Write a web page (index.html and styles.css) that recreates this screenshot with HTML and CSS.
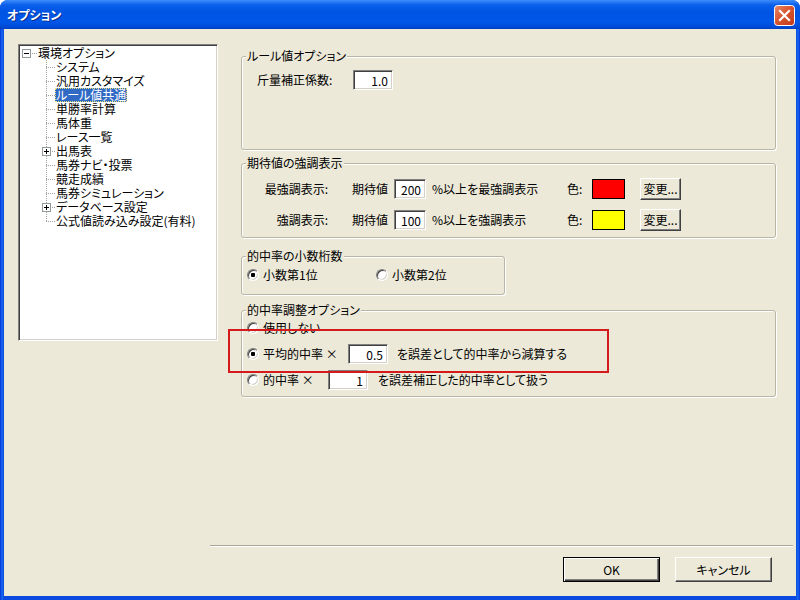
FILE: index.html
```html
<!DOCTYPE html>
<html lang="ja">
<head>
    <meta charset="UTF-8">
    <title>オプション</title>
    <link rel="stylesheet" href="styles.css">
</head>
<body>

    <div class="window">
        <!-- Title bar -->
        <div class="titlebar">
            <span class="title">オプション</span>
            <button class="close-btn" title="閉じる">
                <svg width="21" height="21" viewBox="0 0 21 21">
                    <defs>
                        <linearGradient id="closeGrad" x1="0" y1="0" x2="1" y2="1">
                            <stop offset="0" stop-color="#e98a6c"/>
                            <stop offset="0.45" stop-color="#d9562f"/>
                            <stop offset="1" stop-color="#c0391a"/>
                        </linearGradient>
                    </defs>
                    <rect x="0.5" y="0.5" width="20" height="20" rx="3" fill="url(#closeGrad)" stroke="#fff"/>
                    <path d="M6 6L15 15M15 6L6 15" stroke="#fff" stroke-width="2.2" stroke-linecap="square"/>
                </svg>
            </button>
        </div>

        <div class="client">
            <div class="main">
                <!-- Option tree -->
                <div class="tree">
                    <div class="tree-row tree-root">
                        <span class="twig twig-root">
                            <svg class="expander" width="9" height="9" viewBox="0 0 9 9"><rect x="0.5" y="0.5" width="8" height="8" fill="#fff" stroke="#919b9c"/><path d="M2 4.5h5" stroke="#000"/></svg>
                        </span>
                        <span class="tree-label">環境オプション</span>
                    </div>
                    <div class="tree-row"><span class="twig"></span><span class="tree-label">システム</span></div>
                    <div class="tree-row"><span class="twig"></span><span class="tree-label">汎用カスタマイズ</span></div>
                    <div class="tree-row"><span class="twig"></span><span class="tree-label selected">ルール値共通</span></div>
                    <div class="tree-row"><span class="twig"></span><span class="tree-label">単勝率計算</span></div>
                    <div class="tree-row"><span class="twig"></span><span class="tree-label">馬体重</span></div>
                    <div class="tree-row"><span class="twig"></span><span class="tree-label">レース一覧</span></div>
                    <div class="tree-row">
                        <span class="twig">
                            <svg class="expander" width="9" height="9" viewBox="0 0 9 9"><rect x="0.5" y="0.5" width="8" height="8" fill="#fff" stroke="#919b9c"/><path d="M2 4.5h5M4.5 2v5" stroke="#000"/></svg>
                        </span>
                        <span class="tree-label">出馬表</span>
                    </div>
                    <div class="tree-row"><span class="twig"></span><span class="tree-label">馬券ナビ・投票</span></div>
                    <div class="tree-row"><span class="twig"></span><span class="tree-label">競走成績</span></div>
                    <div class="tree-row"><span class="twig"></span><span class="tree-label">馬券シミュレーション</span></div>
                    <div class="tree-row">
                        <span class="twig">
                            <svg class="expander" width="9" height="9" viewBox="0 0 9 9"><rect x="0.5" y="0.5" width="8" height="8" fill="#fff" stroke="#919b9c"/><path d="M2 4.5h5M4.5 2v5" stroke="#000"/></svg>
                        </span>
                        <span class="tree-label">データベース設定</span>
                    </div>
                    <div class="tree-row"><span class="twig twig-last"></span><span class="tree-label">公式値読み込み設定(有料)</span></div>
                </div>

                <!-- Settings panel -->
                <div class="panel">
                    <div class="group group-rule">
                        <span class="group-title">ルール値オプション</span>
                        <div class="field-row">
                            <span class="field-label">斤量補正係数:</span>
                            <input class="edit" type="text" value="1.0" readonly>
                        </div>
                    </div>

                    <div class="group group-emph">
                        <span class="group-title">期待値の強調表示</span>
                        <div class="emph-row">
                            <span class="emph-label">最強調表示:</span>
                            <span class="emph-kitai">期待値</span>
                            <input class="edit edit-short" type="text" value="200" readonly>
                            <span class="emph-text">%以上を最強調表示</span>
                            <span class="color-label">色:</span>
                            <span class="swatch swatch-red"></span>
                            <button class="btn btn-small">変更...</button>
                        </div>
                        <div class="emph-row">
                            <span class="emph-label">強調表示:</span>
                            <span class="emph-kitai">期待値</span>
                            <input class="edit edit-short" type="text" value="100" readonly>
                            <span class="emph-text">%以上を強調表示</span>
                            <span class="color-label">色:</span>
                            <span class="swatch swatch-yellow"></span>
                            <button class="btn btn-small">変更...</button>
                        </div>
                    </div>

                    <div class="group group-decimal">
                        <span class="group-title">的中率の小数桁数</span>
                        <div class="radio-row">
                            <span class="radio-item decimal-first"><span class="radio checked"></span>小数第1位</span>
                            <span class="radio-item"><span class="radio"></span>小数第2位</span>
                        </div>
                    </div>

                    <div class="group group-adjust">
                        <span class="group-title">的中率調整オプション</span>
                        <div class="adjust-row">
                            <span class="radio"></span>
                            <span class="adjust-text">使用しない</span>
                        </div>
                        <div class="adjust-row row-avg">
                            <span class="radio checked"></span>
                            <span class="adjust-text avg-text">平均的中率 ×</span>
                            <input class="edit" type="text" value="0.5" readonly>
                            <span class="adjust-tail">を誤差として的中率から減算する</span>
                        </div>
                        <div class="adjust-row row-rate">
                            <span class="radio"></span>
                            <span class="adjust-text rate-text">的中率 ×</span>
                            <input class="edit" type="text" value="1" readonly>
                            <span class="adjust-tail tail-rate">を誤差補正した的中率として扱う</span>
                        </div>
                        <!-- red annotation frame -->
                        <div class="highlight-box"></div>
                    </div>
                </div>
            </div>

            <!-- Footer buttons -->
            <div class="footer">
                <div class="separator"></div>
                <div class="button-row">
                    <button class="btn btn-default">OK</button>
                    <button class="btn">キャンセル</button>
                </div>
            </div>
        </div>
    </div>

</body>
</html>
```

FILE: styles.css
```css
* {
    box-sizing: border-box;
}

body {
    margin: 0;
    background: #ffffff;
    font-family: "Noto Sans CJK JP", "Noto Sans", sans-serif;
    font-size: 12px;
    line-height: 14px;
    color: #000;
    font-feature-settings: "palt";
}

/* Window frame */
.window {
    width: 800px;
    height: 600px;
    display: flex;
    flex-direction: column;
    background: linear-gradient(to right, #0831d9 0, #166aee 2px, #0a4ae0 4px, #0a4ae0 796px, #166aee 798px, #0831d9 800px);
    border-radius: 8px 8px 0 0;
    overflow: hidden;
}

.titlebar {
    height: 29px;
    flex: none;
    display: flex;
    align-items: center;
    justify-content: space-between;
    padding: 0 5px 0 7px;
    background: linear-gradient(to bottom, #3c8ef8 0, #2a7af5 2px, #0a5fea 5px, #0054e3 12px, #0056e8 22px, #0049d6 27px, #003fc0 29px);
}

.title {
    color: #fff;
    font-weight: bold;
    font-size: 12px;
    text-shadow: 1px 1px 0 #0b2d8c;
    margin-top: 1px;
}

.close-btn {
    width: 21px;
    height: 21px;
    padding: 0;
    border: none;
    background: none;
    display: block;
    margin-top: 1px;
}

.close-btn svg {
    display: block;
}

.client {
    flex: 1;
    margin: 0 4px 4px;
    background: #ece9d8;
    display: flex;
    flex-direction: column;
}

.main {
    flex: 1;
    display: flex;
    padding: 15px 0 0 14px;
}

/* Tree view */
.tree {
    width: 200px;
    height: 297px;
    flex: none;
    background: #fff;
    border: 1px solid;
    border-color: #808080 #fff #fff #808080;
    box-shadow: inset 1px 1px 0 #404040, inset -1px -1px 0 #d4d0c8;
    padding-top: 1px;
}

.tree-row {
    height: 14px;
    display: flex;
    align-items: flex-start;
    padding-left: 23px;
    white-space: nowrap;
}

.tree-root {
    padding-left: 3px;
}

.twig {
    width: 13px;
    height: 14px;
    flex: none;
    background:
        repeating-linear-gradient(to right, #a0a0a0 0 1px, transparent 1px 2px) 4px 7px / 9px 1px no-repeat,
        repeating-linear-gradient(to bottom, #a0a0a0 0 1px, transparent 1px 2px) 4px 0 / 1px 14px no-repeat;
}

.twig-last {
    background:
        repeating-linear-gradient(to right, #a0a0a0 0 1px, transparent 1px 2px) 4px 7px / 9px 1px no-repeat,
        repeating-linear-gradient(to bottom, #a0a0a0 0 1px, transparent 1px 2px) 4px 0 / 1px 8px no-repeat;
}

.twig-root {
    width: 15px;
    background: repeating-linear-gradient(to right, #a0a0a0 0 1px, transparent 1px 2px) 10px 7px / 5px 1px no-repeat;
}

.expander {
    display: block;
    margin-top: 3px;
}

.tree-label {
    padding: 0 1px;
    height: 14px;
}

.tree-label.selected {
    background: #316ac5;
    color: #fff;
    outline: 1px dotted #e8e07a;
    outline-offset: -1px;
}

/* Right panel */
.panel {
    width: 535px;
    margin: 12px 0 0 23px;
}

.group {
    position: relative;
    border: 1px solid #b9b6a6;
    border-radius: 3px;
    box-shadow: 1px 1px 0 #fff, inset 1px 1px 0 #fff;
}

.group-title {
    position: absolute;
    top: -8px;
    left: 4px;
    padding: 0 1px;
    background: #ece9d8;
    line-height: 14px;
    white-space: nowrap;
}

.group-rule {
    height: 94px;
    padding: 13px 0 0 15px;
}

.group-emph {
    height: 75px;
    margin-top: 13px;
    padding: 15px 0 0 6px;
}

.group-decimal {
    width: 264px;
    height: 39px;
    margin-top: 18px;
    padding: 11px 0 0 5px;
}

.group-adjust {
    height: 87px;
    margin-top: 15px;
    padding: 10px 0 0 5px;
}

/* Form rows */
.field-row,
.emph-row {
    display: flex;
    align-items: center;
    height: 20px;
    white-space: nowrap;
}

.emph-row + .emph-row {
    margin-top: 11px;
}

.field-label {
    width: 96px;
}

.emph-label {
    width: 80px;
    text-align: right;
}

.emph-kitai {
    width: 42px;
    margin-left: 24px;
}

.emph-text {
    width: 135px;
    margin-left: 6px;
}

.color-label {
    width: 25px;
}

.swatch {
    width: 33px;
    height: 20px;
    border: 1px solid #000;
}

.swatch-red {
    background: #ff0000;
}

.swatch-yellow {
    background: #ffff00;
}

.edit {
    width: 40px;
    height: 20px;
    flex: none;
    padding: 0 4px 0 0;
    font: inherit;
    text-align: right;
    color: #000;
    background: #fff;
    border: 1px solid;
    border-color: #808080 #fff #fff #808080;
    box-shadow: inset 1px 1px 0 #404040, inset -1px -1px 0 #d4d0c8;
    outline: none;
}

.edit-short {
    width: 32px;
}

/* Buttons */
.btn {
    font: inherit;
    color: #000;
    background: #ece9d8;
    border: 1px solid;
    border-color: #fff #404040 #404040 #fff;
    box-shadow: inset -1px -1px 0 #808080;
    padding: 0;
    width: 97px;
    height: 25px;
}

.btn-small {
    width: 41px;
    height: 22px;
    margin-left: 15px;
}

.btn-default {
    border-color: #000;
    box-shadow: inset 1px 1px 0 #fff, inset -1px -1px 0 #404040, inset -2px -2px 0 #808080;
}

/* Radios */
.radio {
    width: 12px;
    height: 12px;
    flex: none;
    border-radius: 50%;
    background: #fff;
    border: 1px solid;
    border-color: #808080 #fff #fff #808080;
    box-shadow: inset 1px 1px 0 #404040, inset -1px -1px 0 #d4d0c8;
}

.radio.checked {
    background: radial-gradient(circle, #000 0 2px, #fff 2.5px);
}

.radio-row {
    display: flex;
    height: 14px;
}

.radio-item {
    display: flex;
    align-items: center;
    gap: 4px;
    white-space: nowrap;
}

.decimal-first {
    width: 129px;
}

.adjust-row {
    display: flex;
    align-items: center;
    height: 14px;
    white-space: nowrap;
}

.adjust-text {
    margin-left: 4px;
}

.row-avg {
    height: 20px;
    margin-top: 9px;
}

.row-rate {
    height: 20px;
    margin-top: 6px;
}

.avg-text {
    width: 85px;
}

.rate-text {
    width: 65px;
}

.adjust-tail {
    margin-left: 9px;
}

.tail-rate {
    margin-left: 10px;
}

.highlight-box {
    position: absolute;
    left: -14px;
    top: 18px;
    width: 381px;
    height: 44px;
    border: 2px solid #d41a1a;
    pointer-events: none;
}

/* Footer */
.footer {
    flex: none;
}

.separator {
    height: 2px;
    margin: 0 3px 0 206px;
    border-top: 1px solid #aca899;
    border-bottom: 1px solid #fff;
}

.button-row {
    display: flex;
    justify-content: flex-end;
    gap: 15px;
    margin: 10px 24px 14px 0;
}
```
